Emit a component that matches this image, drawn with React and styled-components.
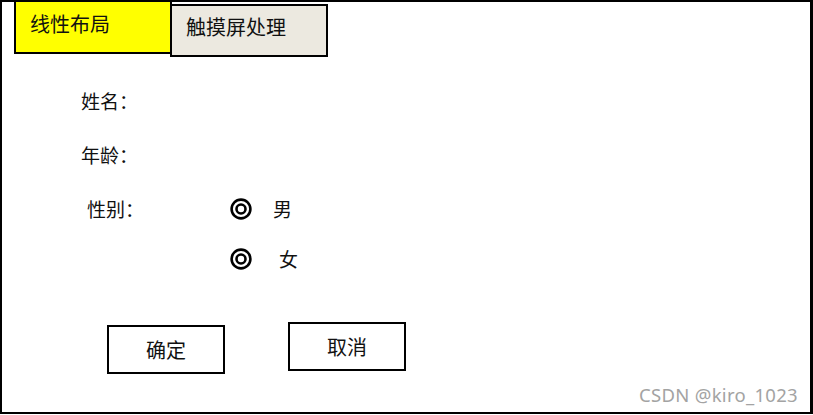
import React from "react";
import styled, { createGlobalStyle } from "styled-components";

const GlobalStyle = createGlobalStyle`
  html, body {
    margin: 0;
    padding: 0;
    background: #fff;
  }
  body {
    font-family: "Noto Sans CJK SC", "Noto Sans", sans-serif;
    color: #111;
  }
`;

const Frame = styled.div`
  position: relative;
  box-sizing: border-box;
  width: 813px;
  height: 414px;
  border: 2px solid #000;
  border-right-width: 3px;
  background: #fff;
`;

const TabBar = styled.div`
  display: flex;
  align-items: flex-start;
  padding-left: 12px;
`;

const Tab = styled.div`
  box-sizing: border-box;
  width: 158px;
  height: ${(p) => (p.$active ? "52px" : "53px")};
  margin-top: ${(p) => (p.$active ? "0" : "2px")};
  margin-left: ${(p) => (p.$active ? "0" : "-2px")};
  padding: ${(p) => (p.$active ? "10px 0 0 14px" : "9px 0 0 14px")};
  border: 2px solid #000;
  border-top-width: ${(p) => (p.$active ? "0" : "2px")};
  background: ${(p) => (p.$active ? "#ffff00" : "#ece9e0")};
  font-size: 20px;
  line-height: 24px;
  white-space: nowrap;
`;

const Form = styled.div`
  display: flex;
  flex-direction: column;
  margin-top: 17px;
  padding-left: 79px;
`;

const Row = styled.div`
  display: flex;
  align-items: center;
  height: ${(p) => p.$h}px;
`;

const Label = styled.div`
  width: ${(p) => 149 - (p.$indent || 0)}px;
  padding-left: ${(p) => p.$indent || 0}px;
  font-size: 19px;
  line-height: 24px;
  flex: none;
`;

const Option = styled.div`
  display: flex;
  align-items: center;
  gap: ${(p) => p.$gap}px;
  font-size: 19px;
  line-height: 24px;
`;

const ButtonRow = styled.div`
  display: flex;
  align-items: flex-start;
  gap: 63px;
  margin-top: 40px;
  padding-left: 105px;
`;

const Button = styled.div`
  box-sizing: border-box;
  width: 118px;
  height: 49px;
  margin-top: ${(p) => p.$drop || 0}px;
  border: 2px solid #000;
  display: flex;
  align-items: center;
  justify-content: center;
  font-size: 20px;
  line-height: 24px;
`;

const Watermark = styled.div`
  position: absolute;
  right: 12px;
  bottom: 5px;
  font-family: "Noto Sans", "Open Sans", sans-serif;
  font-size: 18.5px;
  color: #a3a3a3;
  letter-spacing: 0.3px;
`;

const RadioMark = () => (
  <svg width="22" height="22" viewBox="0 0 22 22">
    <circle cx="11" cy="11" r="9.4" fill="none" stroke="#000" strokeWidth="2.6" />
    <circle cx="11" cy="11" r="4.5" fill="none" stroke="#000" strokeWidth="2.6" />
  </svg>
);

export default function App() {
  return (
    <>
      <GlobalStyle />
      <Frame>
        <TabBar>
          <Tab $active>线性布局</Tab>
          <Tab>触摸屏处理</Tab>
        </TabBar>
        <Form>
          <Row $h={54}>
            <Label>姓名：</Label>
          </Row>
          <Row $h={54}>
            <Label>年龄：</Label>
          </Row>
          <Row $h={54}>
            <Label $indent={6}>性别：</Label>
            <Option $gap={21}>
              <RadioMark />
              <span>男</span>
            </Option>
          </Row>
          <Row $h={46}>
            <Label />
            <Option $gap={27}>
              <RadioMark />
              <span>女</span>
            </Option>
          </Row>
        </Form>
        <ButtonRow>
          <Button $drop={3}>确定</Button>
          <Button>取消</Button>
        </ButtonRow>
        <Watermark>CSDN @kiro_1023</Watermark>
      </Frame>
    </>
  );
}
